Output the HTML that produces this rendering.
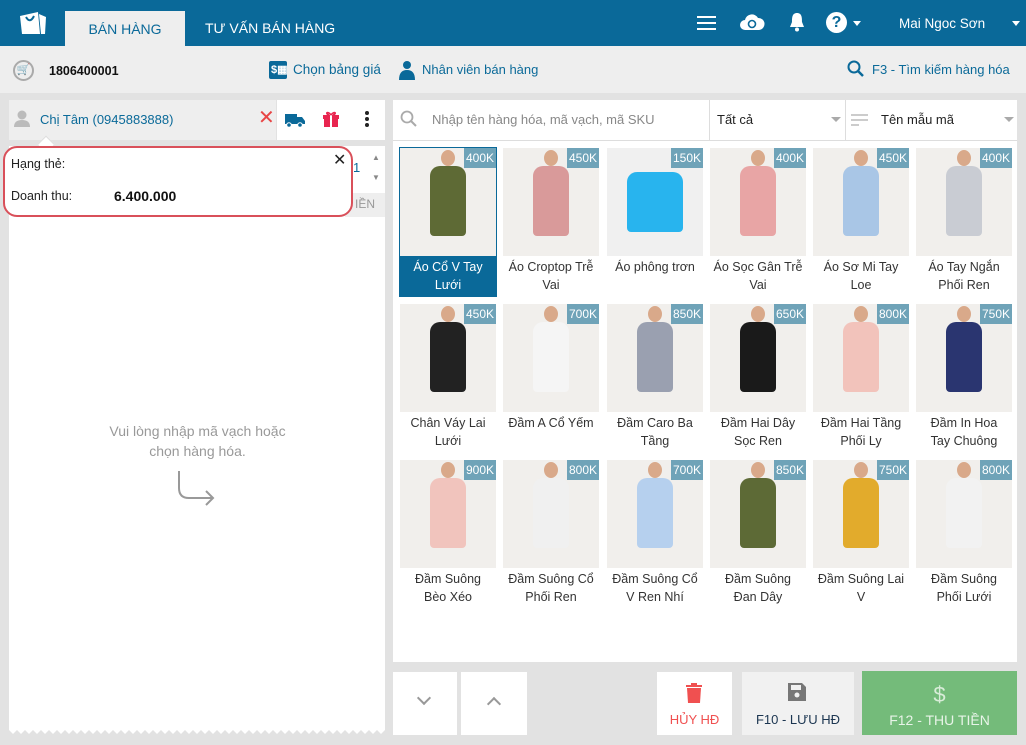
<!DOCTYPE html>
<html><head><meta charset="utf-8"><style>
*{box-sizing:border-box;margin:0;padding:0}
body{width:1026px;height:745px;overflow:hidden;background:#e2e2e2;font-family:"Liberation Sans",sans-serif;font-size:13px;color:#333;position:relative}
.a{position:absolute}
.hdr{left:0;top:0;width:1026px;height:46px;background:#0a6999}
.tab{color:#fff;font-size:14px}
.bar{left:0;top:46px;width:1026px;height:47px;background:#eeeeee}
.blue{color:#0b6a99}
.tile{position:absolute;width:96px;height:152px}
.img{position:absolute;left:0;top:0;width:96px;height:108px;background:#f1efec;overflow:hidden}
.dress{position:absolute;left:30px;top:18px;width:36px;height:70px;border-radius:10px 10px 4px 4px}
.head{position:absolute;left:41px;top:2px;width:14px;height:16px;border-radius:50%;background:#d9a98a}
.price{position:absolute;right:0;top:0;width:32px;height:20px;background:#6fa3b8;color:#fff;font-size:12px;line-height:20px;text-align:center}
.nm{position:absolute;top:110px;left:-4px;width:104px;text-align:center;font-size:12.5px;line-height:18px;color:#333}
.sel{height:148px;outline:1px solid #0a6999}
.sel .nm{background:#0a6999;color:#fff;left:0;width:96px;height:40px;top:108px;padding-top:2px}
</style></head><body>
<div class="a hdr"></div>
<svg class="a" style="left:18px;top:10px" width="30" height="26" viewBox="0 0 30 26"><path d="M2 6 L20 2 L22 24 L4 24Z" fill="#fff"/><path d="M21 4 L28 7 L27 24 L23 24Z" fill="#fff"/><path d="M8 7 Q12 14 16 6" stroke="#0a6999" stroke-width="2" fill="none"/></svg>
<div class="a" style="left:65px;top:11px;width:120px;height:35px;background:#eeeeee;color:#0a6999;font-size:14px;text-align:center;line-height:36px">BÁN HÀNG</div>
<div class="a tab" style="left:205px;top:20px">TƯ VẤN BÁN HÀNG</div>
<div class="a" style="left:697px;top:16px;width:19px;height:2px;background:#fff;box-shadow:0 6px 0 #fff,0 12px 0 #fff"></div>
<svg class="a" style="left:739px;top:12px" width="26" height="20"><path d="M6 18 A5 5 0 0 1 6 8 A7 7 0 0 1 19 6 A6 6 0 0 1 20 18Z" fill="#fff"/><circle cx="13" cy="12" r="3.5" stroke="#0a6999" stroke-width="1.6" fill="none"/></svg>
<svg class="a" style="left:788px;top:11px" width="18" height="22"><path d="M9 2 C4 2 4 7 4 11 L2 16 L16 16 L14 11 C14 7 14 2 9 2Z" fill="#fff"/><circle cx="9" cy="18.5" r="2" fill="#fff"/></svg>
<div class="a" style="left:826px;top:12px;width:21px;height:21px;border-radius:50%;background:#fff;color:#0a6999;font-weight:bold;font-size:16px;text-align:center;line-height:21px">?</div>
<div class="a" style="left:853px;top:21px;border:4px solid transparent;border-top:5px solid #fff"></div>
<div class="a tab" style="left:899px;top:16px;font-size:13.5px">Mai Ngoc Sơn</div>
<div class="a" style="left:1012px;top:21px;border:4px solid transparent;border-top:5px solid #fff"></div>

<div class="a bar"></div>
<div class="a" style="left:13px;top:60px;width:21px;height:21px;border-radius:50%;border:2px solid #aaa;color:#aaa;font-size:11px;text-align:center;line-height:17px">🛒</div>
<div class="a" style="left:49px;top:64px;font-weight:bold;font-size:12.5px;color:#111">1806400001</div>
<div class="a" style="left:269px;top:61px;width:18px;height:18px;background:#0a6999;border-radius:2px;color:#fff;font-size:11px;font-weight:bold;line-height:18px;padding-left:2px">$▦</div>
<div class="a blue" style="left:293px;top:62px;font-size:13.5px">Chọn bảng giá</div>
<svg class="a" style="left:398px;top:60px" width="18" height="20"><circle cx="9" cy="5" r="4" fill="#0a6999"/><path d="M1 20 Q1 10 9 10 Q17 10 17 20Z" fill="#0a6999"/></svg>
<div class="a blue" style="left:422px;top:62px;font-size:13px">Nhân viên bán hàng</div>
<svg class="a" style="left:847px;top:60px" width="18" height="18"><circle cx="7" cy="7" r="5.5" stroke="#0a6999" stroke-width="2" fill="none"/><path d="M11 11 L16 16" stroke="#0a6999" stroke-width="2.5"/></svg>
<div class="a blue" style="left:872px;top:62px;font-size:13px">F3 - Tìm kiếm hàng hóa</div>

<div class="a" style="left:9px;top:100px;width:267px;height:40px;background:#eeeeee"></div>
<svg class="a" style="left:13px;top:110px" width="18" height="18"><circle cx="9" cy="5" r="4.5" fill="#bbb"/><path d="M1 17 Q1 10 9 10 Q17 10 17 17Z" fill="#bbb"/></svg>
<div class="a blue" style="left:40px;top:112px;font-size:13px">Chị Tâm (0945883888)</div>
<div class="a" style="left:258px;top:108px;color:#e84545;font-size:20px;line-height:20px">✕</div>
<div class="a" style="left:277px;top:100px;width:108px;height:40px;background:#fff"></div>
<svg class="a" style="left:285px;top:112px" width="20" height="16"><rect x="0" y="2" width="12" height="10" fill="#0a6999"/><path d="M12 5 L17 5 L20 9 L20 12 L12 12Z" fill="#0a6999"/><circle cx="4" cy="13" r="2.3" fill="#0a6999" stroke="#fff"/><circle cx="15" cy="13" r="2.3" fill="#0a6999" stroke="#fff"/></svg>
<svg class="a" style="left:322px;top:110px" width="18" height="18"><rect x="1" y="5" width="16" height="4" fill="#e8254f"/><rect x="2" y="9" width="14" height="8" fill="#e8254f"/><rect x="8" y="5" width="2" height="12" fill="#fff"/><path d="M9 5 C5 0 3 4 7 5 M9 5 C13 0 15 4 11 5" stroke="#e8254f" stroke-width="1.6" fill="none"/></svg>
<div class="a" style="left:365px;top:111px;width:4px;height:4px;border-radius:50%;background:#222;box-shadow:0 6px 0 #222,0 12px 0 #222"></div>
<div class="a" style="left:9px;top:146px;width:376px;height:590px;background:#fff"></div>
<div class="a" style="left:345px;top:147px;width:40px;height:46px;background:#fff;color:#0a6999">
 <span class="a" style="left:8px;top:13px">1</span><span class="a" style="left:27px;top:6px;font-size:8px;color:#888">▲</span><span class="a" style="left:27px;top:26px;font-size:8px;color:#888">▼</span></div>
<div class="a" style="left:345px;top:193px;width:40px;height:24px;background:#eeeeee;color:#999;font-size:12px;line-height:22px;padding-left:10px">IỀN</div>
<div class="a" style="left:40px;top:138px;width:12px;height:12px;background:#fff;transform:rotate(45deg);border-left:1px solid #ddd;border-top:1px solid #ddd"></div>
<div class="a" style="left:3px;top:146px;width:350px;height:71px;border:2px solid #d9505a;border-radius:14px;background:#fff"></div>
<div class="a" style="left:11px;top:157px;font-size:12.5px;color:#222">Hạng thẻ:</div>
<div class="a" style="left:333px;top:150px;font-size:16px;color:#222">✕</div>
<div class="a" style="left:11px;top:189px;font-size:12.5px;color:#222">Doanh thu:</div>
<div class="a" style="left:114px;top:188px;font-size:14px;font-weight:bold;color:#111">6.400.000</div>
<div class="a" style="left:90px;top:421px;width:215px;text-align:center;color:#999;font-size:14px;line-height:20px">Vui lòng nhập mã vạch hoặc<br>chọn hàng hóa.</div>
<svg class="a" style="left:175px;top:470px" width="45" height="40"><path d="M4 1 L4 18 Q4 28 14 28 L38 28 M31 21 L38 28 L31 35" stroke="#999" stroke-width="2" fill="none"/></svg>
<svg class="a" style="left:9px;top:728px" width="376" height="9"><path d="M0 9 L0 2 L4 6 L8 2 L12 6 L16 2 L20 6 L24 2 L28 6 L32 2 L36 6 L40 2 L44 6 L48 2 L52 6 L56 2 L60 6 L64 2 L68 6 L72 2 L76 6 L80 2 L84 6 L88 2 L92 6 L96 2 L100 6 L104 2 L108 6 L112 2 L116 6 L120 2 L124 6 L128 2 L132 6 L136 2 L140 6 L144 2 L148 6 L152 2 L156 6 L160 2 L164 6 L168 2 L172 6 L176 2 L180 6 L184 2 L188 6 L192 2 L196 6 L200 2 L204 6 L208 2 L212 6 L216 2 L220 6 L224 2 L228 6 L232 2 L236 6 L240 2 L244 6 L248 2 L252 6 L256 2 L260 6 L264 2 L268 6 L272 2 L276 6 L280 2 L284 6 L288 2 L292 6 L296 2 L300 6 L304 2 L308 6 L312 2 L316 6 L320 2 L324 6 L328 2 L332 6 L336 2 L340 6 L344 2 L348 6 L352 2 L356 6 L360 2 L364 6 L368 2 L372 6 L376 2 L376 9Z" fill="#e2e2e2"/></svg>

<div class="a" style="left:393px;top:100px;width:624px;height:40px;background:#fff"></div>
<svg class="a" style="left:400px;top:110px" width="18" height="18"><circle cx="7" cy="7" r="5.5" stroke="#aaa" stroke-width="1.8" fill="none"/><path d="M11 11 L16 16" stroke="#aaa" stroke-width="2"/></svg>
<div class="a" style="left:432px;top:112px;color:#888;font-size:13px">Nhập tên hàng hóa, mã vạch, mã SKU</div>
<div class="a" style="left:709px;top:100px;width:1px;height:40px;background:#ddd"></div>
<div class="a" style="left:717px;top:112px;color:#222;font-size:13px">Tất cả</div>
<div class="a" style="left:831px;top:117px;border:5px solid transparent;border-top:5px solid #aaa"></div>
<div class="a" style="left:845px;top:100px;width:1px;height:40px;background:#ddd"></div>
<div class="a" style="left:851px;top:114px;width:17px;height:2px;background:#ccc;box-shadow:0 5px 0 #ccc"></div><div class="a" style="left:851px;top:124px;width:8px;height:2px;background:#ccc"></div>
<div class="a" style="left:881px;top:112px;color:#222;font-size:13px">Tên mẫu mã</div>
<div class="a" style="left:1004px;top:117px;border:5px solid transparent;border-top:5px solid #aaa"></div>
<div class="a" style="left:393px;top:140px;width:624px;height:522px;background:#fff;border-top:1px solid #ddd"></div>

<div id="g"></div>
<script>
var d=[["Áo Cổ V Tay<br>Lưới","400K","#5e6a35"],["Áo Croptop Trễ<br>Vai","450K","#d99a9a"],["Áo phông trơn","150K","#28b4ee"],["Áo Sọc Gân Trễ<br>Vai","400K","#e8a5a5"],["Áo Sơ Mi Tay<br>Loe","450K","#a9c6e6"],["Áo Tay Ngắn<br>Phối Ren","400K","#c9ccd3"],
["Chân Váy Lai<br>Lưới","450K","#222"],["Đầm A Cổ Yếm","700K","#f5f5f5"],["Đầm Caro Ba<br>Tầng","850K","#9aa0b0"],["Đầm Hai Dây<br>Sọc Ren","650K","#1a1a1a"],["Đầm Hai Tầng<br>Phối Ly","800K","#f2c3bb"],["Đầm In Hoa<br>Tay Chuông","750K","#2a3570"],
["Đầm Suông<br>Bèo Xéo","900K","#f1c4bd"],["Đầm Suông Cổ<br>Phối Ren","800K","#f0f0f0"],["Đầm Suông Cổ<br>V Ren Nhí","700K","#b6d0ee"],["Đầm Suông<br>Đan Dây","850K","#5d6a36"],["Đầm Suông Lai<br>V","750K","#e2ab2c"],["Đầm Suông<br>Phối Lưới","800K","#f2f2f2"]];
var xs=[400,503,607,710,813,916],h="";
d.forEach(function(p,i){var x=xs[i%6],y=148+Math.floor(i/6)*156;
h+='<div class="tile'+(i==0?' sel':'')+'" style="left:'+x+'px;top:'+y+'px"><div class="img"'+(i==2?' style="background:#f0f0f0"':'')+'>'+(i==2?'':'<div class="head"></div>')+'<div class="dress" style="background:'+p[2]+(i==2?';left:20px;width:56px;height:60px;top:24px':'')+'"></div><div class="price">'+p[1]+'</div></div><div class="nm">'+p[0]+'</div></div>';});
document.getElementById('g').outerHTML=h;
</script>

<div class="a" style="left:393px;top:672px;width:64px;height:63px;background:#fff"></div>
<div class="a" style="left:419px;top:693px;width:10px;height:10px;border-right:2px solid #999;border-bottom:2px solid #999;transform:rotate(45deg)"></div>
<div class="a" style="left:461px;top:672px;width:66px;height:63px;background:#fff"></div>
<div class="a" style="left:489px;top:699px;width:10px;height:10px;border-left:2px solid #999;border-top:2px solid #999;transform:rotate(45deg)"></div>
<div class="a" style="left:657px;top:672px;width:75px;height:63px;background:#fff"></div>
<svg class="a" style="left:685px;top:683px" width="18" height="20"><rect x="1" y="2" width="16" height="2" fill="#f05050"/><rect x="6" y="0" width="6" height="2" fill="#f05050"/><path d="M2 5 L16 5 L15 20 L3 20Z" fill="#f05050"/></svg>
<div class="a" style="left:657px;top:712px;width:75px;text-align:center;color:#f05050;font-size:13px">HỦY HĐ</div>
<div class="a" style="left:742px;top:672px;width:112px;height:63px;background:#f1f1f1"></div>
<svg class="a" style="left:788px;top:683px" width="18" height="18"><path d="M0 0 L14 0 L18 4 L18 18 L0 18Z" fill="#777"/><rect x="3" y="2" width="10" height="5" fill="#f1f1f1"/><circle cx="9" cy="12" r="2.5" fill="#f1f1f1"/></svg>
<div class="a" style="left:742px;top:712px;width:112px;text-align:center;color:#1b3550;font-size:13px">F10 - LƯU HĐ</div>
<div class="a" style="left:862px;top:671px;width:155px;height:64px;background:#74bb7a"></div>
<div class="a" style="left:862px;top:682px;width:155px;text-align:center;color:#d8ecd8;font-size:22px">$</div>
<div class="a" style="left:862px;top:712px;width:155px;text-align:center;color:#e8f4e8;font-size:14px">F12 - THU TIỀN</div>
</body></html>
